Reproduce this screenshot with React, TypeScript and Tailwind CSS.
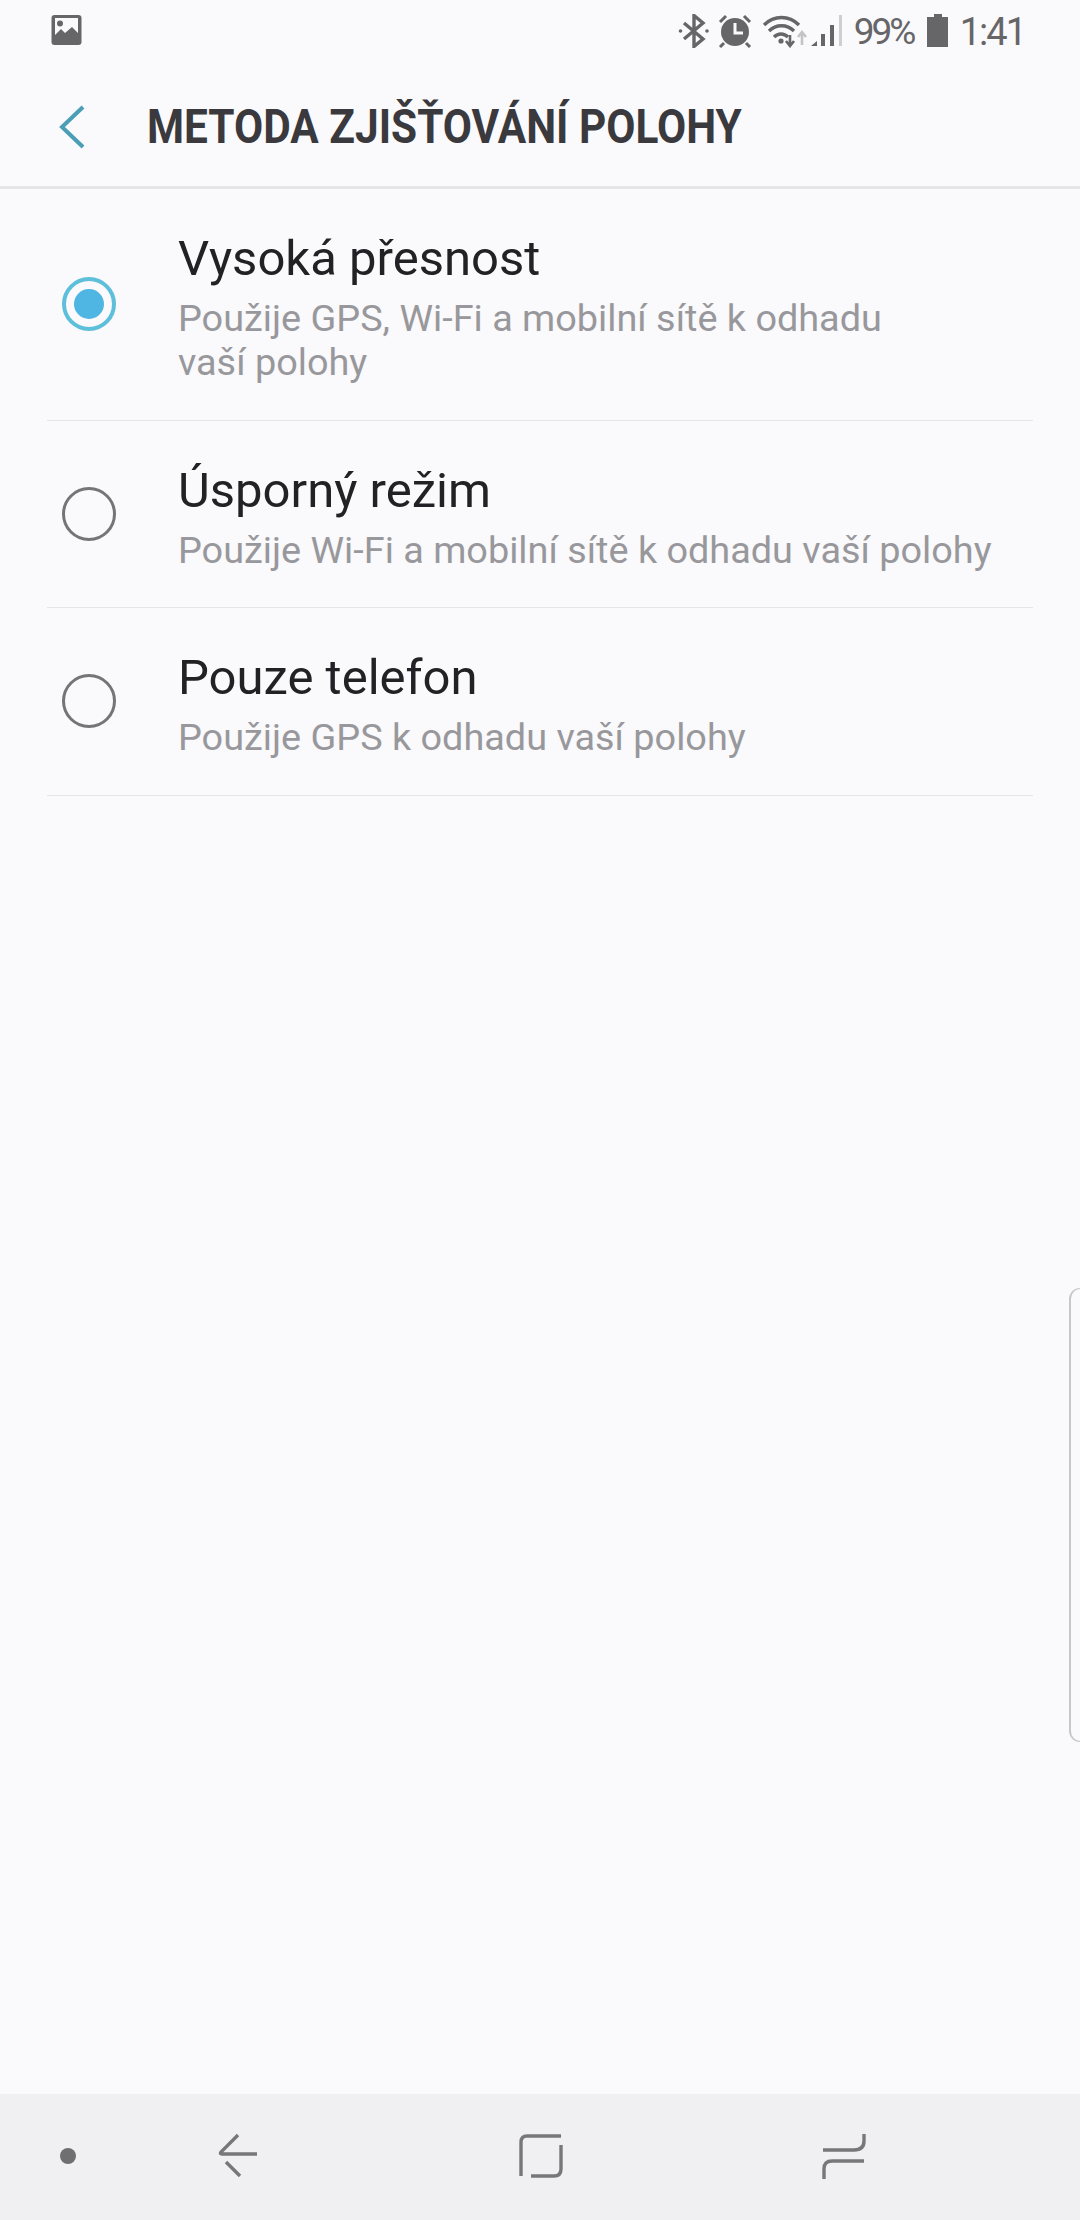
const font = { fontFamily: '"Roboto", "Noto Sans", sans-serif' };

function Radio({ on }: { on?: boolean }) {
  return on ? (
    <span className="flex h-[54px] w-[54px] shrink-0 items-center justify-center rounded-full border-[4px] border-[#5dbfda]">
      <span className="h-[30px] w-[30px] rounded-full bg-[#4fb5e3]" />
    </span>
  ) : (
    <span className="h-[54px] w-[54px] shrink-0 rounded-full border-[3px] border-[#757577]" />
  );
}

function Row({ on, title, sub }: { on?: boolean; title: string; sub: React.ReactNode }) {
  return (
    <div className="mx-[47px] flex items-center border-b border-[#e5e4e8] pb-[35.5px] pt-[40px]">
      <div className="-mt-[5px] ml-[15px] mr-[62px] flex">
        <Radio on={on} />
      </div>
      <div className="min-w-0">
        <div className="text-[49px] leading-[60px] text-[#222226]">{title}</div>
        <div className="mt-[7px] whitespace-nowrap text-[37.85px] leading-[44px] text-[#98989c]">{sub}</div>
      </div>
    </div>
  );
}

function StatusBar() {
  const c = "#666668";
  return (
    <div className="flex h-[65px] items-start justify-between pl-[51px] pr-[55px] pt-[14px]">
      <svg width="31" height="32" viewBox="0 0 31 32">
        <rect x="0.5" y="1" width="30" height="30" rx="3" fill={c} />
        <rect x="4" y="4" width="23" height="20" fill="#faf9fb" />
        <circle cx="9" cy="9.5" r="3" fill={c} />
        <path d="M3 27V22L10 15L14 19L21 13L28 20V27Z" fill={c} />
      </svg>
      <div className="flex items-start">
        <svg width="32" height="34" viewBox="0 0 32 34" fill="none" stroke={c} strokeWidth="3.4" className="mr-[8px]">
          <path d="M6 9L25 25L16 32.5V1.5L25 9L6 25" />
          <circle cx="2.5" cy="17" r="1.8" fill={c} stroke="none" />
          <circle cx="29" cy="17" r="1.8" fill={c} stroke="none" />
        </svg>
        <svg width="34" height="34" viewBox="0 0 34 34" className="mr-[10px]">
          <circle cx="17" cy="18" r="14" fill={c} />
          <path d="M17 9V19H25" fill="none" stroke="#faf9fb" strokeWidth="3" />
          <path d="M2 8L8 2M32 8L26 2M6 29L2 33M28 29L32 33" stroke={c} strokeWidth="3" />
        </svg>
        <svg width="48" height="34" viewBox="0 0 48 34" fill="none" className="mr-[1px]">
          <path d="M2 11C12 1 27 1 37 11M7 17C14 10 25 10 32 17M12 23C16 19 22 19 26 23" stroke={c} strokeWidth="3.4" />
          <circle cx="19" cy="27" r="2.6" fill={c} />
          <path d="M28 21V31M24 27L28 32L32 27" stroke={c} strokeWidth="2.6" />
          <path d="M40 31V19M36 23L40 18L44 23" stroke="#c4c4c6" strokeWidth="2.6" />
        </svg>
        <svg width="32" height="34" viewBox="0 0 32 34" className="mr-[11px]">
          <path d="M0 32L6 27V32Z" fill={c} />
          <rect x="10" y="20" width="4" height="12" fill={c} />
          <rect x="19" y="11" width="4" height="21" fill={c} />
          <rect x="28" y="1" width="3" height="31" fill="#cfcfd0" />
        </svg>
        <span className="-mt-[2px] w-[61px] whitespace-nowrap text-[37px] leading-[40px] text-[#666668] [letter-spacing:-3px]">99%</span>
        <svg width="22" height="33" viewBox="0 0 22 33" className="ml-[12px] mr-[11px]">
          <path d="M7 0H15V3H21V33H0V3H7Z" fill={c} />
        </svg>
        <span className="-mt-[2px] whitespace-nowrap text-[38px] leading-[40px] text-[#666668] [letter-spacing:-2px]">1:41</span>
      </div>
    </div>
  );
}

export default function App() {
  return (
    <div style={font} className="relative flex h-[2220px] w-[1080px] flex-col overflow-hidden bg-[#faf9fb]">
      <StatusBar />
      <div className="flex h-[124px] items-center border-b-[3px] border-[#e5e4e8] pl-[58px]">
        <svg width="28" height="44" viewBox="0 0 28 44" fill="none" stroke="#4a9eb6" strokeWidth="4" className="mr-[61px] mt-[2px]">
          <path d="M25 2L4 22L25 42" />
        </svg>
        <div className="mt-[2px] origin-left scale-x-[0.8645] whitespace-nowrap text-[49px] font-bold leading-[60px] text-[#3a3a3e]">
          METODA ZJIŠŤOVÁNÍ POLOHY
        </div>
      </div>
      <Row
        on
        title="Vysoká přesnost"
        sub={
          <>
            Použije GPS, Wi-Fi a mobilní sítě k odhadu
            <br />
            vaší polohy
          </>
        }
      />
      <Row title="Úsporný režim" sub="Použije Wi-Fi a mobilní sítě k odhadu vaší polohy" />
      <Row title="Pouze telefon" sub="Použije GPS k odhadu vaší polohy" />
      <div className="flex-1" />
      <div className="flex h-[126px] items-center bg-[#f0eff2]">
        <div className="relative h-full w-full">
          <span className="absolute left-[60px] top-[54px] h-[16px] w-[16px] rounded-full bg-[#6f6f72]" />
          <svg width="44" height="48" viewBox="0 0 44 48" fill="none" stroke="#77777a" strokeWidth="3.4" className="absolute left-[216px] top-[39px]">
            <path d="M22 2L5 19Q3.5 21 6 21H41M10 29L24 43" />
          </svg>
          <svg width="48" height="48" viewBox="0 0 48 48" fill="none" stroke="#77777a" strokeWidth="3.4" className="absolute left-[516px] top-[39px]">
            <path d="M5 43V9Q5 3 11 3H45M45 12V36Q45 43 38 43H15" />
          </svg>
          <svg width="48" height="52" viewBox="0 0 48 52" fill="none" stroke="#77777a" strokeWidth="3.4" className="absolute left-[820px] top-[37px]">
            <path d="M3 19H34Q44 19 44 10V3M44 30H12Q4 30 4 38V48" />
          </svg>
        </div>
      </div>
      <div className="absolute right-0 top-[1288px] h-[454px] w-[11px] rounded-l-[12px] border-y border-l-2 border-[#c8c8cb]" />
    </div>
  );
}
